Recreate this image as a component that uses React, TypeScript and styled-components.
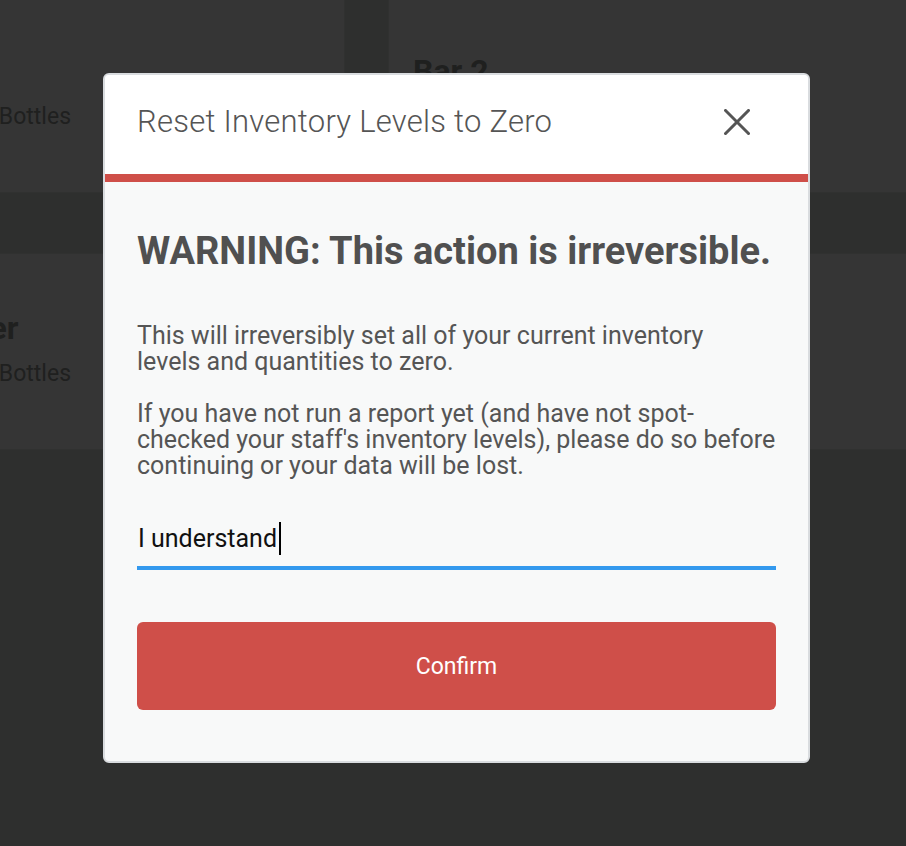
import { useState } from 'react';
import styled, { createGlobalStyle } from 'styled-components';

const GlobalStyle = createGlobalStyle`
  html, body {
    margin: 0;
    padding: 0;
    background: #2e2f2e;
    overflow: hidden;
  }

  body {
    font-family: Roboto, 'Liberation Sans', sans-serif;
  }
`;

type CardData = {
  title: string;
  subtitle: string;
};

const cards: CardData[] = [
  { title: 'Deck', subtitle: '16,800 Bottles' },
  { title: 'Bar 2', subtitle: '540 Bottles' },
  { title: 'Cooler', subtitle: '12,000 Bottles' },
  { title: 'Storage', subtitle: '860 Bottles' },
];

const CloseIcon = () => (
  <svg width="26" height="26" viewBox="0 0 26 26" fill="none">
    <path d="M1.5 1.5 L24.5 24.5 M24.5 1.5 L1.5 24.5" stroke="#555" strokeWidth="3" strokeLinecap="square" />
  </svg>
);

const App = () => {
  const [value, setValue] = useState('I understand');

  return (
    <>
      <GlobalStyle />
      <Page>
        <Board>
          {cards.map((card) => (
            <Card key={card.title}>
              <CardTitle>{card.title}</CardTitle>
              <CardSubtitle>{card.subtitle}</CardSubtitle>
            </Card>
          ))}
        </Board>
      </Page>

      <Modal>
        <ModalHeader>
          <ModalTitle>Reset Inventory Levels to Zero</ModalTitle>
          <CloseButton aria-label="Close">
            <CloseIcon />
          </CloseButton>
        </ModalHeader>
        <ModalBody>
          <Warning>WARNING: This action is irreversible.</Warning>
          <Paragraph>
            This will irreversibly set all of your current inventory
            <br />
            levels and quantities to zero.
          </Paragraph>
          <Paragraph>
            If you have not run a report yet (and have not spot-checked your staff's inventory
            levels), please do so before continuing or your data will be lost.
          </Paragraph>
          <InputWrap>
            <ConfirmInput value={value} onChange={(e) => setValue(e.target.value)} />
            <Caret aria-hidden>{value}</Caret>
          </InputWrap>
          <ConfirmButton>Confirm</ConfirmButton>
        </ModalBody>
      </Modal>
    </>
  );
};

export default App;

const Page = styled.div`
  width: 906px;
  height: 846px;
  overflow: hidden;
`;

const Board = styled.div`
  display: grid;
  grid-template-columns: 446px 1fr;
  column-gap: 43px;
  row-gap: 60px;
  margin-top: -4px;
  margin-left: -101px;
  margin-right: -40px;
`;

const Card = styled.div`
  height: 197px;
  box-sizing: border-box;
  padding: 55px 24px 0 24px;
  background: #353535;
  border: 1px solid #303130;
  border-radius: 4px;
  color: #1f201f;
`;

const CardTitle = styled.div`
  font-size: 32px;
  font-weight: 700;
  line-height: 38px;
`;

const CardSubtitle = styled.div`
  margin-top: 13px;
  font-size: 23px;
  line-height: 28px;
`;

const Modal = styled.div`
  position: fixed;
  top: 73px;
  left: 103px;
  width: 707px;
  box-sizing: border-box;
  border: 2px solid #d9dcdf;
  border-radius: 6px;
  background: #f8f9f9;
  overflow: hidden;
`;

const ModalHeader = styled.div`
  display: flex;
  align-items: center;
  justify-content: space-between;
  height: 93px;
  padding: 0 58px 6px 32px;
  background: #ffffff;
  border-bottom: 8px solid #cf4f49;
`;

const ModalTitle = styled.h2`
  margin: 0;
  font-size: 31px;
  font-weight: 300;
  letter-spacing: 0.25px;
  color: #555555;
`;

const CloseButton = styled.button`
  display: flex;
  padding: 0;
  border: none;
  background: transparent;
  cursor: pointer;
`;

const ModalBody = styled.div`
  display: flex;
  flex-direction: column;
  padding: 47px 32px 51px 32px;
`;

const Warning = styled.h1`
  margin: 0 0 50px 0;
  font-size: 38px;
  line-height: 44px;
  font-weight: 700;
  color: #505050;
`;

const Paragraph = styled.p`
  margin: 0 0 26px 0;
  font-size: 25px;
  line-height: 26px;
  color: #555555;
`;

const InputWrap = styled.div`
  position: relative;
  display: flex;
  flex-direction: column;
  margin-top: 6px;
`;

const ConfirmInput = styled.input`
  height: 55px;
  padding: 0 1px;
  border: none;
  border-bottom: 4px solid #3399ee;
  background: transparent;
  font-family: inherit;
  font-size: 25px;
  color: #111111;
  outline: none;
  caret-color: transparent;
`;

const Caret = styled.span`
  position: absolute;
  top: 0;
  left: 1px;
  height: 55px;
  display: flex;
  align-items: center;
  font-size: 25px;
  white-space: pre;
  visibility: hidden;
  pointer-events: none;

  &::after {
    content: '';
    visibility: visible;
    width: 2px;
    height: 33px;
    margin-left: 2px;
    background: #000000;
  }
`;

const ConfirmButton = styled.button`
  margin-top: 52px;
  height: 88px;
  border: none;
  border-radius: 6px;
  background: #cf4f49;
  color: #ffffff;
  font-family: inherit;
  font-size: 23px;
  cursor: pointer;
`;
